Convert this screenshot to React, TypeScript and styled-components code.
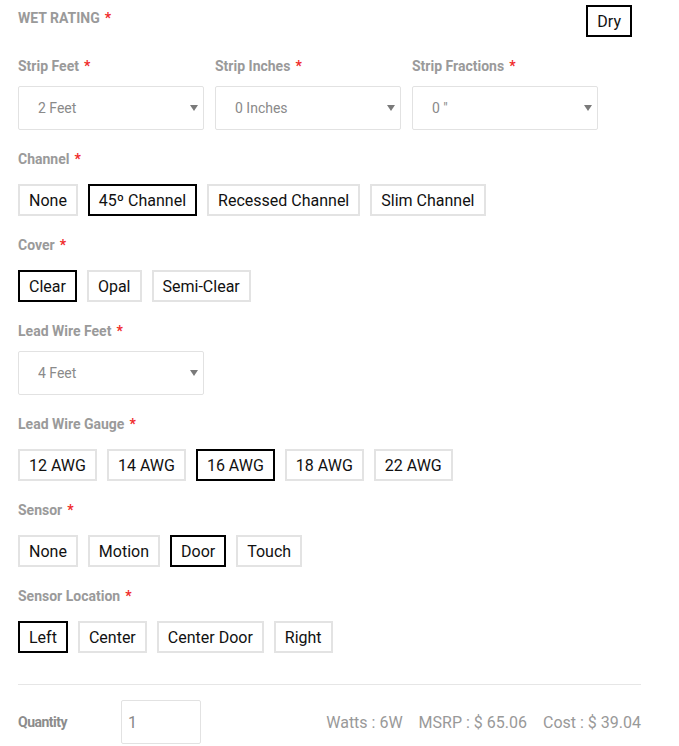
import React, { useState } from "react";
import styled, { createGlobalStyle } from "styled-components";

const Global = createGlobalStyle`
  html, body { margin: 0; padding: 0; background: #fff; }
  body { font-family: Roboto, "Noto Sans", Arial, sans-serif; }
  * { box-sizing: border-box; }
`;

const Page = styled.div`
  width: 679px;
  padding: 5px 38px 0 18px;
`;

const HeaderRow = styled.div`
  display: flex;
  justify-content: space-between;
  align-items: flex-start;
  padding-right: 9px;
`;

const Label = styled.div<{ $upper?: boolean }>`
  font-size: 14px;
  font-weight: 700;
  color: #9a9a9a;
  line-height: 20px;
  height: 20px;
  text-transform: ${(p) => (p.$upper ? "uppercase" : "none")};
  margin-top: ${(p) => (p.$upper ? "3px" : "0")};
`;

const Star = styled.span`
  color: #f02a2a;
  margin-left: 5px;
`;

const Field = styled.div`
  margin-top: 19px;
`;

const SelectGrid = styled.div`
  display: grid;
  grid-template-columns: repeat(3, 186px);
  column-gap: 11px;
`;

const SelectWrap = styled.div`
  position: relative;
  width: 186px;
  margin-top: 10px;
`;

const Select = styled.select`
  appearance: none;
  -webkit-appearance: none;
  width: 100%;
  height: 44px;
  border: 1px solid #e2e2e2;
  border-radius: 2px;
  background: #fff;
  padding: 0 19px;
  font-family: Roboto, Arial, sans-serif;
  font-size: 14px;
  color: #8a8a8a;
  outline: none;
`;

const Arrow = styled.span`
  position: absolute;
  right: 6px;
  top: 19px;
  width: 0;
  height: 0;
  border-left: 4px solid transparent;
  border-right: 4px solid transparent;
  border-top: 6px solid #7a7a7a;
  pointer-events: none;
`;

const Options = styled.div`
  display: flex;
  flex-wrap: wrap;
  gap: 10px;
  margin-top: 15px;
`;

const OptionButton = styled.button<{ $active?: boolean }>`
  height: 32px;
  padding: 2px 9px 0;
  border: 2px solid ${(p) => (p.$active ? "#000" : "#e3e3e3")};
  background: #fff;
  font-family: Roboto, Arial, sans-serif;
  font-size: 16px;
  color: #111;
  cursor: pointer;
  line-height: 26px;
`;

const Divider = styled.hr`
  border: none;
  border-top: 1px solid #e6e6e6;
  margin: 31px 0 0;
  width: 623px;
`;

const FooterRow = styled.div`
  display: flex;
  align-items: center;
  width: 623px;
  margin-top: 15px;
`;

const QtyLabel = styled.div`
  font-size: 14px;
  font-weight: 700;
  color: #8c8c8c;
  letter-spacing: -0.5px;
  width: 103px;
`;

const QtyInput = styled.input`
  width: 80px;
  height: 44px;
  border: 1px solid #e2e2e2;
  border-radius: 2px;
  padding: 0 6px;
  font-family: Roboto, Arial, sans-serif;
  font-size: 16px;
  color: #888;
  outline: none;
`;

const Stats = styled.div`
  margin-left: auto;
  display: flex;
  gap: 16px;
  font-size: 16px;
  color: #999;
`;

type Group = { label: string; options: string[]; active: number };

const groupsA: Group[] = [
  { label: "Channel", options: ["None", "45º Channel", "Recessed Channel", "Slim Channel"], active: 1 },
  { label: "Cover", options: ["Clear", "Opal", "Semi-Clear"], active: 0 },
];

const groupsB: Group[] = [
  { label: "Lead Wire Gauge", options: ["12 AWG", "14 AWG", "16 AWG", "18 AWG", "22 AWG"], active: 2 },
  { label: "Sensor", options: ["None", "Motion", "Door", "Touch"], active: 2 },
  { label: "Sensor Location", options: ["Left", "Center", "Center Door", "Right"], active: 0 },
];

function SelectBox({ value }: { value: string }) {
  return (
    <SelectWrap>
      <Select defaultValue={value}>
        <option>{value}</option>
      </Select>
      <Arrow />
    </SelectWrap>
  );
}

function ButtonGroup({ g }: { g: Group }) {
  const [active, setActive] = useState(g.active);
  return (
    <Field>
      <Label>
        {g.label}
        <Star>*</Star>
      </Label>
      <Options>
        {g.options.map((o, i) => (
          <OptionButton key={o} $active={i === active} onClick={() => setActive(i)}>
            {o}
          </OptionButton>
        ))}
      </Options>
    </Field>
  );
}

export default function App() {
  return (
    <Page>
      <Global />
      <HeaderRow>
        <Label $upper>
          Wet Rating<Star>*</Star>
        </Label>
        <OptionButton $active>Dry</OptionButton>
      </HeaderRow>

      <SelectGrid>
        <Field>
          <Label>
            Strip Feet<Star>*</Star>
          </Label>
          <SelectBox value="2 Feet" />
        </Field>
        <Field>
          <Label>
            Strip Inches<Star>*</Star>
          </Label>
          <SelectBox value="0 Inches" />
        </Field>
        <Field>
          <Label>
            Strip Fractions<Star>*</Star>
          </Label>
          <SelectBox value={'0 "'} />
        </Field>
      </SelectGrid>

      {groupsA.map((g) => (
        <ButtonGroup key={g.label} g={g} />
      ))}

      <Field>
        <Label>
          Lead Wire Feet<Star>*</Star>
        </Label>
        <SelectBox value="4 Feet" />
      </Field>

      {groupsB.map((g) => (
        <ButtonGroup key={g.label} g={g} />
      ))}

      <Divider />
      <FooterRow>
        <QtyLabel>Quantity</QtyLabel>
        <QtyInput defaultValue="1" />
        <Stats>
          <span>Watts : 6W</span>
          <span>MSRP : $ 65.06</span>
          <span>Cost : $ 39.04</span>
        </Stats>
      </FooterRow>
    </Page>
  );
}
